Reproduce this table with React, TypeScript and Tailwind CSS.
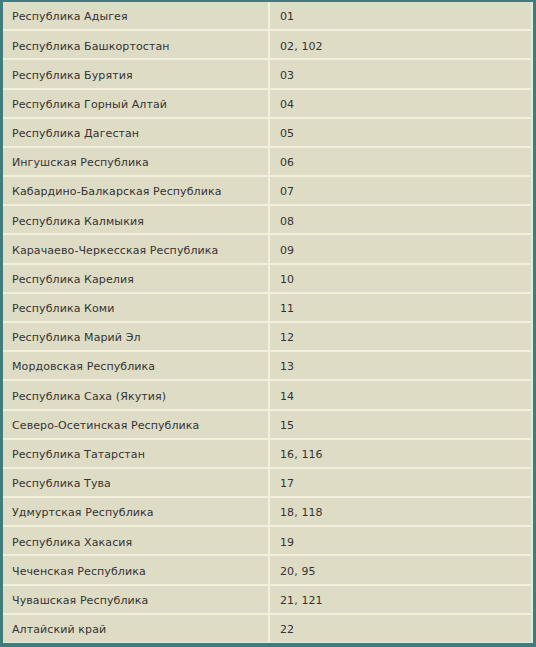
const rows: [string, string][] = [
  ['Республика Адыгея', '01'],
  ['Республика Башкортостан', '02, 102'],
  ['Республика Бурятия', '03'],
  ['Республика Горный Алтай', '04'],
  ['Республика Дагестан', '05'],
  ['Ингушская Республика', '06'],
  ['Кабардино-Балкарская Республика', '07'],
  ['Республика Калмыкия', '08'],
  ['Карачаево-Черкесская Республика', '09'],
  ['Республика Карелия', '10'],
  ['Республика Коми', '11'],
  ['Республика Марий Эл', '12'],
  ['Мордовская Республика', '13'],
  ['Республика Саха (Якутия)', '14'],
  ['Северо-Осетинская Республика', '15'],
  ['Республика Татарстан', '16, 116'],
  ['Республика Тува', '17'],
  ['Удмуртская Республика', '18, 118'],
  ['Республика Хакасия', '19'],
  ['Чеченская Республика', '20, 95'],
  ['Чувашская Республика', '21, 121'],
  ['Алтайский край', '22'],
]

export default function App() {
  return (
    <div className="h-[647px] w-[536px] bg-[#3f7c7b] pt-[2px] pl-[3px] pr-[3px] pb-[4px]">
      <div className="h-full border-r-2 border-b border-[#d9eee0] bg-[#f2efdb]">
        <div
          className="grid h-full grid-cols-[265px_1fr] gap-x-[2px] gap-y-[2px]"
          style={{ fontFamily: '"DejaVu Sans", Verdana, sans-serif' }}
        >
          {rows.map(([name, code]) => (
            <div key={name} className="contents">
              <div className="flex items-center bg-[#dfdcc6] pl-[9px] pt-[4px] text-[11px] tracking-[0.1px] text-[#333]">{name}</div>
              <div className="flex items-center bg-[#dfdcc6] pl-[10px] pt-[4px] text-[11px] tracking-[0.1px] text-[#333]">{code}</div>
            </div>
          ))}
        </div>
      </div>
    </div>
  )
}
